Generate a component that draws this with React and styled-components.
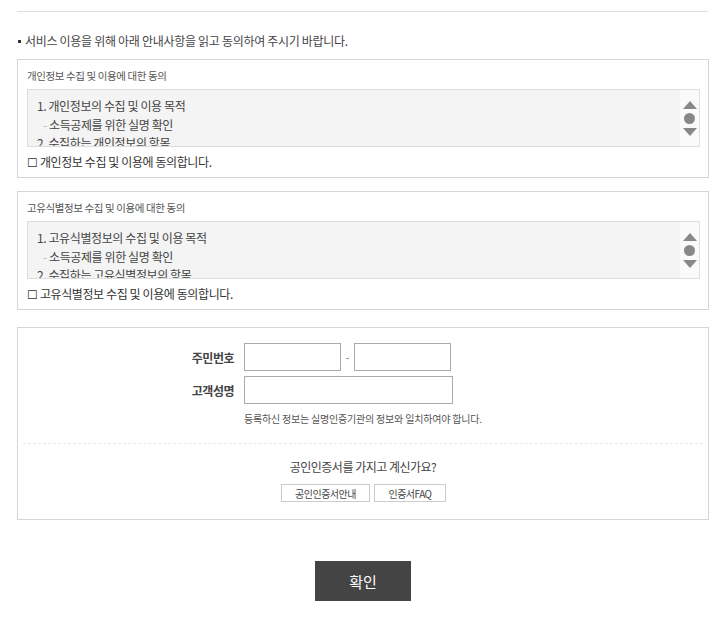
import React from 'react';
import styled, { createGlobalStyle } from 'styled-components';

const GlobalStyle = createGlobalStyle`
  body {
    margin: 0;
    background: #ffffff;
    font-family: "Noto Sans CJK KR", "Noto Sans", sans-serif;
    color: #333333;
  }
`;

const Page = styled.div`
  width: 692px;
  padding: 11px 0 0 17px;
`;

const TopLine = styled.div`
  border-top: 1px solid #dddddd;
  margin-right: 1px;
`;

const Notice = styled.p`
  display: flex;
  align-items: center;
  margin: 20px 0 9px 1px;
  font-size: 12px;
  line-height: 18px;
  letter-spacing: -0.3px;
  color: #444444;

  &::before {
    content: '';
    width: 3px;
    height: 3px;
    background: #333333;
    margin-right: 4px;
  }
`;

const AgreeBox = styled.section`
  border: 1px solid #d5d5d5;
  padding: 8px 8px 6px 9px;
  & + & {
    margin-top: 13px;
  }
`;

const AgreeTitle = styled.h3`
  margin: 0 0 5px;
  font-size: 10.5px;
  font-weight: normal;
  line-height: 16px;
  letter-spacing: -0.4px;
  color: #555555;
`;

const TermsArea = styled.div`
  display: flex;
  height: 56px;
  border: 1px solid #dddddd;
  background: #f4f4f4;
`;

const TermsText = styled.div`
  flex: 1;
  overflow: hidden;
  padding: 7px 9px 0;
  font-size: 12px;
  line-height: 18.5px;
  letter-spacing: -0.4px;
  color: #444444;
`;

const TermsLine = styled.div`
  white-space: nowrap;
  padding-left: ${(p) => (p.$sub ? '6px' : '0')};
  &::before {
    content: ${(p) => (p.$sub ? "'- '" : 'none')};
    color: #bbbbbb;
  }
`;

const ScrollBar = styled.div`
  width: 19px;
  background: #fafafa;
  display: flex;
  flex-direction: column;
  align-items: center;
  justify-content: center;
  gap: 4px;
`;

const CheckLine = styled.label`
  display: block;
  margin-top: 6px;
  font-size: 12px;
  line-height: 18px;
  letter-spacing: -0.4px;
  color: #333333;
`;

const AuthBox = styled.section`
  margin-top: 17px;
  border: 1px solid #d5d5d5;
  padding: 15px 5px 17px;
`;

const FormGrid = styled.div`
  display: grid;
  grid-template-columns: 211px auto;
  column-gap: 10px;
  row-gap: 5px;
  align-items: center;
`;

const Label = styled.div`
  text-align: right;
  font-size: 12px;
  font-weight: bold;
  letter-spacing: -0.5px;
  color: #444444;
`;

const Field = styled.div`
  display: flex;
  align-items: center;
`;

const Input = styled.input`
  box-sizing: border-box;
  width: ${(p) => p.$w}px;
  height: 28px;
  border: 1px solid #aaaaaa;
  padding: 0 5px;
  margin: 0;
  outline: none;
`;

const Dash = styled.span`
  width: 13px;
  text-align: center;
  font-size: 11px;
  color: #777777;
`;

const Note = styled.p`
  margin: 7px 0 0 221px;
  font-size: 10px;
  line-height: 16px;
  letter-spacing: -0.2px;
  color: #555555;
`;

const Divider = styled.div`
  margin-top: 16px;
  border-top: 1px dashed #e8e8e8;
`;

const Question = styled.p`
  margin: 14px 0 0;
  text-align: center;
  font-size: 12px;
  line-height: 18px;
  letter-spacing: -0.5px;
  color: #444444;
`;

const LinkRow = styled.div`
  display: flex;
  justify-content: center;
  gap: 4px;
  margin-top: 8px;
  padding-left: 1px;
`;

const LinkButton = styled.button`
  box-sizing: border-box;
  width: ${(p) => p.$w}px;
  height: 18px;
  padding: 0;
  border: 1px solid #cccccc;
  background: #ffffff;
  font-family: inherit;
  font-size: 10px;
  letter-spacing: -0.5px;
  color: #444444;
`;

const Actions = styled.div`
  display: flex;
  justify-content: center;
  margin-top: 41px;
`;

const SubmitButton = styled.button`
  width: 96px;
  height: 40px;
  border: none;
  background: #444444;
  color: #ffffff;
  font-family: inherit;
  font-size: 15px;
`;

const ScrollIcons = () => (
  <ScrollBar>
    <svg width="14" height="8" viewBox="0 0 14 8">
      <polygon points="7,0 14,8 0,8" fill="#888888" />
    </svg>
    <svg width="11" height="11" viewBox="0 0 11 11">
      <circle cx="5.5" cy="5.5" r="5.5" fill="#888888" />
    </svg>
    <svg width="14" height="8" viewBox="0 0 14 8">
      <polygon points="0,0 14,0 7,8" fill="#888888" />
    </svg>
  </ScrollBar>
);

const agreements = [
  {
    title: '개인정보 수집 및 이용에 대한 동의',
    first: '1. 개인정보의 수집 및 이용 목적',
    third: '2. 수집하는 개인정보의 항목',
    check: '개인정보 수집 및 이용에 동의합니다.',
  },
  {
    title: '고유식별정보 수집 및 이용에 대한 동의',
    first: '1. 고유식별정보의 수집 및 이용 목적',
    third: '2. 수집하는 고유식별정보의 항목',
    check: '고유식별정보 수집 및 이용에 동의합니다.',
  },
];

const App = () => (
  <>
    <GlobalStyle />
    <Page>
      <TopLine />
      <Notice>서비스 이용을 위해 아래 안내사항을 읽고 동의하여 주시기 바랍니다.</Notice>
      {agreements.map((a) => (
        <AgreeBox key={a.title}>
          <AgreeTitle>{a.title}</AgreeTitle>
          <TermsArea>
            <TermsText>
              <TermsLine>{a.first}</TermsLine>
              <TermsLine $sub>소득공제를 위한 실명 확인</TermsLine>
              <TermsLine>{a.third}</TermsLine>
            </TermsText>
            <ScrollIcons />
          </TermsArea>
          <CheckLine>☐ {a.check}</CheckLine>
        </AgreeBox>
      ))}
      <AuthBox>
        <FormGrid>
          <Label>주민번호</Label>
          <Field>
            <Input $w={97} />
            <Dash>-</Dash>
            <Input $w={97} />
          </Field>
          <Label>고객성명</Label>
          <Field>
            <Input $w={209} />
          </Field>
        </FormGrid>
        <Note>등록하신 정보는 실명인증기관의 정보와 일치하여야 합니다.</Note>
        <Divider />
        <Question>공인인증서를 가지고 계신가요?</Question>
        <LinkRow>
          <LinkButton $w={89}>공인인증서안내</LinkButton>
          <LinkButton $w={72}>인증서FAQ</LinkButton>
        </LinkRow>
      </AuthBox>
      <Actions>
        <SubmitButton>확인</SubmitButton>
      </Actions>
    </Page>
  </>
);

export default App;
